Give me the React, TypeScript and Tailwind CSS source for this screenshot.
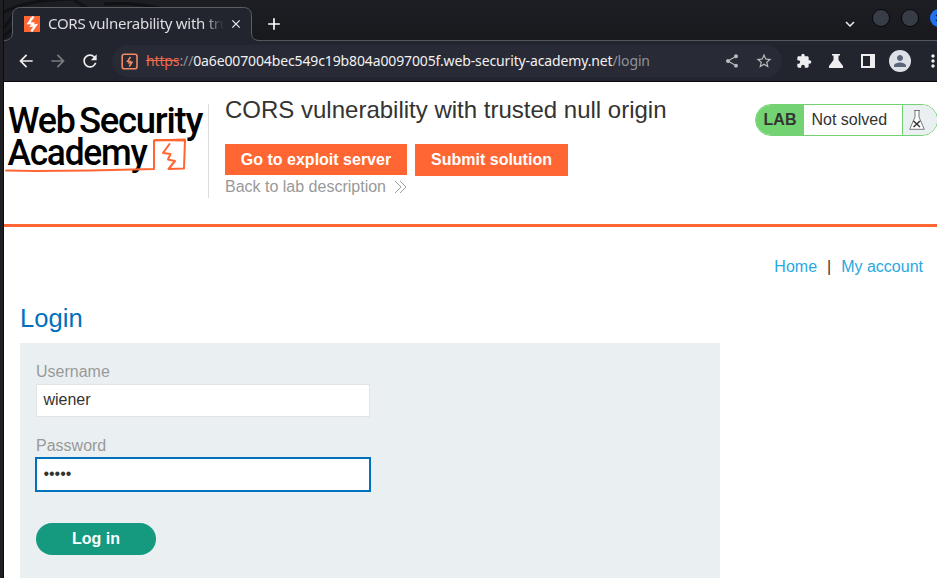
import React from 'react';
import {
  MdArrowBack,
  MdArrowForward,
  MdRefresh,
  MdShare,
  MdStarOutline,
  MdExtension,
  MdClose,
  MdAdd,
  MdPerson,
  MdMoreVert,
  MdKeyboardArrowDown,
} from 'react-icons/md';

function BoltIcon({ className }: { className: string }) {
  return (
    <svg viewBox="0 0 16 16" className={className} fill="none" stroke="currentColor" strokeWidth="2.2">
      <path d="M9.500 0.500L4.500 7.200L9 7.500L7.500 9.800L11.700 9.200L7.300 15.500" />
      <path d="M7 1.500L5.500 5.500" strokeWidth="1" />
    </svg>
  );
}

function TabStrip() {
  return (
    <div className="relative flex h-[41px] shrink-0 overflow-hidden bg-linear-to-b from-[#1d1e24] to-[#18191d]">
      <svg className="absolute left-0 top-0" width="180" height="41" fill="none" stroke="#111216" strokeWidth="3">
        <path d="M0 12C30 -4 60 2 100 -4M70 0l16 10M100 4q30 -2 60 5M0 28L10 14M0 36l8-7" />
      </svg>
      <div className="absolute bottom-0 left-0 h-px w-full bg-[#55575e]" />
      <svg className="absolute left-0 top-0" width="260" height="41">
        <path
          d="M0 40.5C5 40.5 8.500 38 8.500 32V15.500C8.500 10.500 11.500 7.500 16.500 7.500H239.500C244.500 7.500 247.500 10.500 247.500 15.500V32C247.500 38 250 40.500 256 40.500V42H0Z"
          fill="#23252e"
        />
        <path
          d="M0 40.500C5 40.500 8.500 38 8.500 32V15.500C8.500 10.500 11.500 7.500 16.500 7.500H239.500C244.500 7.500 247.500 10.500 247.500 15.500V32C247.500 38 250 40.500 256 40.500"
          fill="none"
          stroke="#5d5f67"
        />
      </svg>
      <div className="relative ml-5 mt-4 flex h-4 w-[204px] shrink-0 items-center">
        <div className="flex size-4 shrink-0 items-center justify-center bg-[#ff6633]">
          <BoltIcon className="size-4 text-white" />
        </div>
        <div className="mb-[2px] ml-2 w-[176px] overflow-hidden whitespace-nowrap font-['Noto_Sans',sans-serif] text-[15px] leading-5 tracking-[-0.27px] text-[#dedfe1] [mask-image:linear-gradient(to_right,black_88%,transparent_100%)]">
          CORS vulnerability with trusted null origin
        </div>
      </div>
      <MdClose className="relative ml-px mt-[17px] size-[14px] shrink-0 text-[#eeeeee]" />
      <MdAdd className="relative ml-[21px] mt-[14px] size-5 shrink-0 text-white" />
      <MdKeyboardArrowDown className="relative ml-[557px] mt-[15px] size-[18px] shrink-0 text-[#eeeeee]" />
      <div className="ml-[13px] mt-[9px] size-[18px] shrink-0 rounded-full border border-[#07080a] bg-[#383c47]" />
      <div className="ml-[11px] mt-[9px] size-[18px] shrink-0 rounded-full border border-[#07080a] bg-[#383c47]" />
      <div className="ml-[11px] mt-[9px] flex size-[18px] shrink-0 items-center justify-center rounded-full bg-[#2370ee]">
        <MdClose className="size-[12px] text-[#101522]" />
      </div>
    </div>
  );
}

function Toolbar() {
  return (
    <div className="flex h-[41px] shrink-0 items-center overflow-hidden border-b border-[#08090b] bg-[#23252e] text-[#eeeeee]">
      <MdArrowBack className="ml-3 size-5 shrink-0" />
      <MdArrowForward className="ml-3 size-5 shrink-0 text-[#7b7c80]" />
      <MdRefresh className="ml-3 size-5 shrink-0" />
      <div className="ml-[12px] flex h-8 w-[670px] shrink-0 items-center rounded-full bg-[#282a35]">
        <svg className="ml-[9px] size-[17px] shrink-0 text-[#f28b62]" viewBox="0 0 17 17" fill="none" stroke="currentColor">
          <rect x="1.200" y="1.200" width="14.800" height="14.600" rx="2" strokeWidth="1.600" />
          <path d="M9.500 4L6.500 8.300L9.200 8.500L8.200 9.800L10.900 9.400L8.200 13.500" strokeWidth="1.500" />
        </svg>
        <div className="ml-2 w-[570px] whitespace-nowrap font-['Noto_Sans',sans-serif] text-[14px] leading-5 tracking-[-0.13px] text-[#8f9299]">
          <span className="text-[#ee6b4d] line-through">https</span>://
          <span className="text-[#f1f1f2]">0a6e007004bec549c19b804a0097005f.web-security-academy.net</span>/login
        </div>
        <MdShare className="ml-[8px] size-4 shrink-0 text-[#b9babc]" />
        <MdStarOutline className="ml-[15px] size-[18px] shrink-0 text-[#b9babc]" />
      </div>
      <MdExtension className="ml-[14px] size-4 shrink-0" />
      <svg className="ml-4 size-4 shrink-0" viewBox="0 0 16 16" fill="currentColor">
        <path d="M4 1h8v1.500h-1.500V7L15 13v2H1v-2L5.500 7V2.500H4Z" />
      </svg>
      <svg className="ml-[17px] h-[14px] w-[14px] shrink-0" viewBox="0 0 14 14">
        <path d="M0 0H14V14H0ZM2 2V12H9V2Z" fill="currentColor" fillRule="evenodd" />
      </svg>
      <div className="ml-[14px] flex size-[22px] shrink-0 items-center justify-center rounded-full bg-[#dde1e6]">
        <MdPerson className="size-[18px] text-[#5b657a]" />
      </div>
      <MdMoreVert className="ml-[12px] size-[20px] shrink-0" />
    </div>
  );
}

function AcademyLogo() {
  return (
    <svg className="h-[84px] w-[204px] shrink-0" viewBox="4 96 204 84">
      <g fill="#000000" fontFamily="Roboto, sans-serif" fontSize="37.500" fontWeight="500" letterSpacing="-1.300">
        <text x="8" y="132.500" textLength="66.500" lengthAdjust="spacingAndGlyphs">Web</text>
        <text x="79" y="132.500" textLength="123" lengthAdjust="spacingAndGlyphs">Security</text>
        <text x="7.500" y="165" textLength="139" lengthAdjust="spacingAndGlyphs">Academy</text>
      </g>
      <g fill="none" stroke="#ff6633" strokeLinejoin="round" strokeLinecap="round">
        <path d="M6 170.500L35 171L90 170.500L154 169V140.500L185 139.500L184 168.500L168.500 169L175 161L168 159.500L170.500 154L163 153L169.500 144" strokeWidth="2" />
        <path d="M155 140L184.500 140.500" strokeWidth="2" />
      </g>
    </svg>
  );
}

function LabStatus() {
  return (
    <div className="ml-auto mr-[-1px] mt-[22px] flex h-8 w-[183px] shrink-0 overflow-hidden rounded-full border border-[#73d373] bg-white text-base text-[#333332]">
      <div className="flex w-[48px] items-center justify-center bg-[#73d373] font-bold">LAB</div>
      <div className="w-[98px] pl-[7.5px] leading-[29px]">Not solved</div>
      <div className="flex flex-1 items-center border-l border-[#73d373] bg-[#eaf0f2] pl-[6px]">
        <svg width="16" height="22" viewBox="0 0 16 22" fill="none">
          <path d="M5 1.500H11M6 1.500V8L0.700 20.300H15.300L10 8V1.500" fill="#ffffff" stroke="#77797b" />
          <path d="M4.500 12L11 18M11 12L4.500 18" stroke="#333332" strokeWidth="1.500" />
        </svg>
      </div>
    </div>
  );
}

function LabHeader() {
  return (
    <header className="flex h-[145px] shrink-0 border-b-[3px] border-[#ff6633]">
      <div className="w-[204px] shrink-0 pt-[14px]">
        <AcademyLogo />
      </div>
      <div className="mt-[22px] h-[94px] w-px shrink-0 bg-[#dddddd]" />
      <div className="ml-4 shrink-0 pt-[12px]">
        <h2 className="text-2xl leading-8 text-[#333332]">CORS vulnerability with trusted null origin</h2>
        <div className="mt-[18px] flex items-start gap-2 text-base font-bold text-white">
          <button className="h-[31px] w-[182px] bg-[#ff6633] leading-[31px]">Go to exploit server</button>
          <button className="h-8 w-[153px] bg-[#ff6633] pb-px leading-[31px]">Submit solution</button>
        </div>
        <a className="flex items-center text-base leading-[21px] text-[#999999]">
          Back to lab description
          <svg className="ml-2" width="14" height="14" viewBox="0 0 14 14" fill="none" stroke="#a0a0a0">
            <path d="M1 1L7 7L1 13M6 1L12 7L6 13" />
          </svg>
        </a>
      </div>
      <LabStatus />
    </header>
  );
}

function LoginForm() {
  return (
    <form className="ml-4 mt-[9px] h-[235px] w-[700px] bg-[#eaf0f2] pl-4 pt-[18px] text-base text-[#333332]">
      <label className="block h-[23px] leading-[21px] text-[#999999]">Username</label>
      <div className="h-[33px] w-[334px] border border-[#e3e3e3] bg-white pl-[6.4px] leading-[30px]">wiener</div>
      <label className="mt-[18px] block h-[22px] leading-[21px] text-[#999999]">Password</label>
      <div className="-ml-px flex h-[35px] w-[336px] items-center border-2 border-[#0071bc] bg-white pb-[2px] pl-[6.4px]">
        <span>•••••</span>
      </div>
      <button className="mt-[31px] block h-8 w-[120px] rounded-full bg-[#159a80] pb-px font-bold leading-[31px] text-white">
        Log in
      </button>
    </form>
  );
}

export default function App() {
  return (
    <div className="flex h-[578px] w-[937px] overflow-hidden bg-white font-['Liberation_Sans',Arial,sans-serif]">
      <div className="w-1 shrink-0 border-r border-[#0c0c0f] bg-[#1f1e23]" />
      <div className="flex w-[933px] shrink-0 flex-col">
        <TabStrip />
        <Toolbar />
        <LabHeader />
        <nav className="mt-[29px] flex justify-end pr-[14px] text-base leading-[21px] text-[#29a8df]">
          <a>Home</a>
          <span className="mx-[10px] text-[#333332]">|</span>
          <a>My account</a>
        </nav>
        <h1 className="ml-4 mt-[25px] text-[25.6px] leading-8 text-[#0071bc]">Login</h1>
        <LoginForm />
      </div>
    </div>
  );
}
